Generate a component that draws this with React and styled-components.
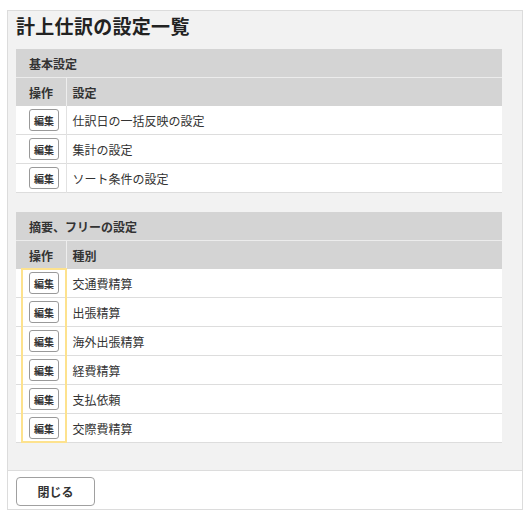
import React from "react";
import styled, { createGlobalStyle } from "styled-components";

const GlobalStyle = createGlobalStyle`
  html, body {
    margin: 0;
    padding: 0;
    background: #ffffff;
    font-family: "Noto Sans CJK JP", "Noto Sans", sans-serif;
    color: #333333;
  }
`;

const Panel = styled.div`
  margin: 10px 7px 0 7px;
  width: 514px;
  border: 1px solid #dcdcdc;
  background: #f2f2f2;
`;

const Body = styled.div`
  padding: 0 20px 27px 8px;
`;

const Title = styled.h1`
  margin: 0 0 8px;
  font-size: 19px;
  line-height: 30px;
  font-weight: 700;
  color: #222222;
  letter-spacing: 0.3px;
`;

const Section = styled.div`
  position: relative;
  & + & {
    margin-top: 19px;
  }
`;

const Table = styled.table`
  width: 100%;
  border-collapse: collapse;
  table-layout: fixed;
  font-size: 12px;
`;

const ActionCol = styled.col`
  width: 50px;
`;

const SectionHead = styled.th`
  height: 28px;
  padding: 0 0 0 13px;
  text-align: left;
  font-weight: 700;
  background: #d4d4d4;
  border-bottom: 1px solid #ececec;
  color: #333333;
`;

const ColHead = styled.th`
  height: 28px;
  padding: 0 0 0 ${(p) => (p.$first ? "13px" : "6px")};
  text-align: left;
  font-weight: 700;
  background: #d4d4d4;
  border-right: ${(p) => (p.$first ? "1px solid #eeeeee" : "none")};
  color: #333333;
`;

const Row = styled.tr`
  background: #ffffff;
  border-bottom: 1px solid #dddddd;
`;

const Cell = styled.td`
  height: 28px;
  padding: 0 0 0 ${(p) => (p.$first ? "13px" : "6px")};
  border-right: ${(p) => (p.$first ? "1px solid #e2e2e2" : "none")};
  vertical-align: middle;
  color: #333333;
`;

const EditButton = styled.button`
  display: block;
  width: 30px;
  height: 22px;
  padding: 0;
  border: 1px solid #999999;
  border-radius: 3px;
  background: #ffffff;
  font-family: inherit;
  font-size: 10px;
  font-weight: 700;
  color: #333333;
  cursor: pointer;
`;

const Highlight = styled.div`
  position: absolute;
  left: 5px;
  top: 56px;
  width: 46px;
  height: 175px;
  box-sizing: border-box;
  border: 2px solid #fde28e;
  pointer-events: none;
`;

const Footer = styled.div`
  border-top: 1px solid #dcdcdc;
  background: #ffffff;
  padding: 6px 8px 3px;
`;

const CloseButton = styled.button`
  width: 79px;
  height: 29px;
  border: 1px solid #a0a0a0;
  border-radius: 4px;
  background: #ffffff;
  font-family: inherit;
  font-size: 12px;
  font-weight: 700;
  color: #333333;
  cursor: pointer;
`;

const basic = ["仕訳日の一括反映の設定", "集計の設定", "ソート条件の設定"];
const free = ["交通費精算", "出張精算", "海外出張精算", "経費精算", "支払依頼", "交際費精算"];

const SettingTable = ({ title, column, items }) => (
  <Table>
    <colgroup>
      <ActionCol />
      <col />
    </colgroup>
    <thead>
      <tr>
        <SectionHead colSpan={2}>{title}</SectionHead>
      </tr>
      <tr>
        <ColHead $first>操作</ColHead>
        <ColHead>{column}</ColHead>
      </tr>
    </thead>
    <tbody>
      {items.map((name) => (
        <Row key={name}>
          <Cell $first>
            <EditButton>編集</EditButton>
          </Cell>
          <Cell>{name}</Cell>
        </Row>
      ))}
    </tbody>
  </Table>
);

const App = () => {
  return (
    <>
      <GlobalStyle />
      <Panel>
        <Body>
          <Title>計上仕訳の設定一覧</Title>
          <Section>
            <SettingTable title="基本設定" column="設定" items={basic} />
          </Section>
          <Section>
            <SettingTable title="摘要、フリーの設定" column="種別" items={free} />
            <Highlight />
          </Section>
        </Body>
        <Footer>
          <CloseButton>閉じる</CloseButton>
        </Footer>
      </Panel>
    </>
  );
};

export default App;
